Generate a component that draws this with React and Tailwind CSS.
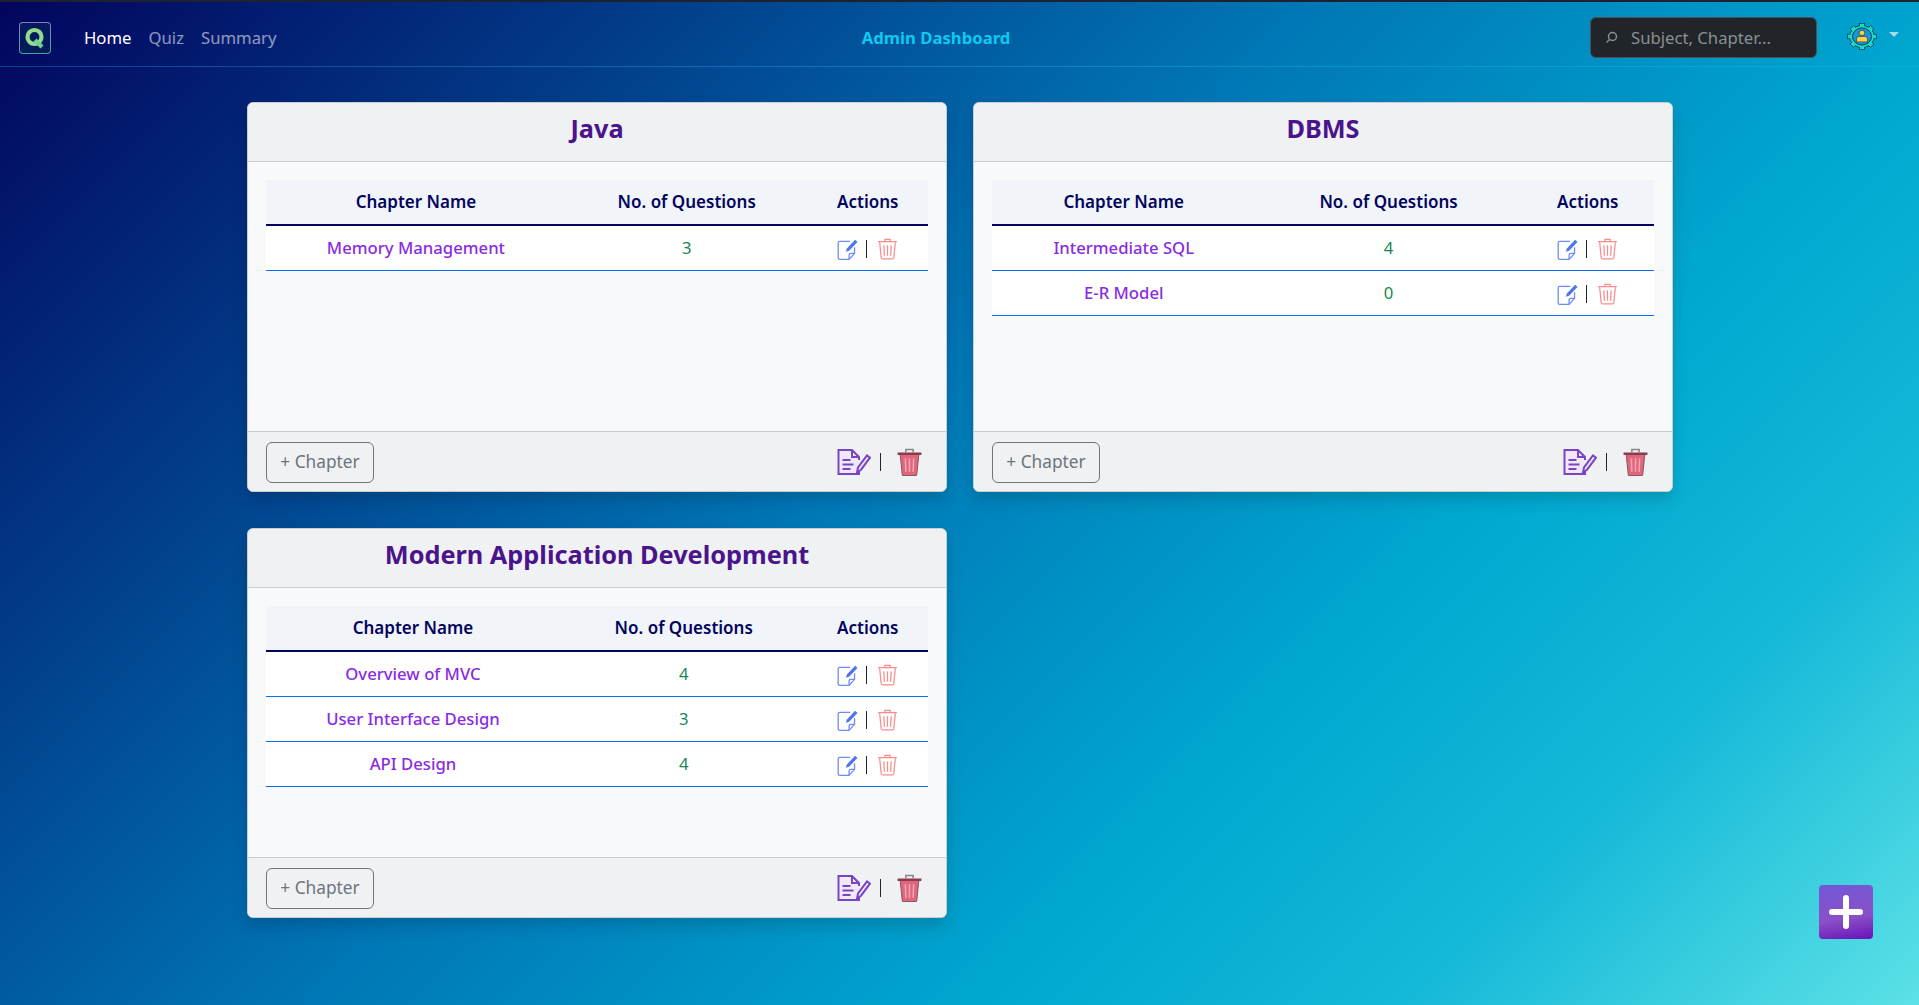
import React from 'react';

const subjects = [
  { name: 'Java', cols: ['w-[45.3%]', 'w-[36.5%]', 'w-[18.2%]'], chapters: [{ name: 'Memory Management', count: 3 }] },
  { name: 'DBMS', cols: ['w-[39.8%]', 'w-[40.2%]', 'w-[20%]'], chapters: [{ name: 'Intermediate SQL', count: 4 }, { name: 'E-R Model', count: 0 }] },
  {
    name: 'Modern Application Development',
    cols: ['w-[44.4%]', 'w-[37.4%]', 'w-[18.2%]'],
    chapters: [
      { name: 'Overview of MVC', count: 4 },
      { name: 'User Interface Design', count: 3 },
      { name: 'API Design', count: 4 },
    ],
  },
];

const EditSmall = () => (
  <svg width="24" height="24" viewBox="0 0 22 22" fill="none">
    <path d="M17 9.500V15l-5 5.500H3.500a1.500 1.500 0 0 1-1.500-1.500V5.500A1.500 1.500 0 0 1 3.500 4H13" stroke="#6d8df5" strokeWidth="1.200" />
    <path d="M12 20.500v-4a1.500 1.500 0 0 1 1.500-1.500H17" stroke="#6d8df5" strokeWidth="1.200" />
    <path d="M9 13.500l1-3 7.500-8 2.200 2-7.700 8z" fill="#4f74ee" />
  </svg>
);

const TrashSmall = () => (
  <svg width="21" height="23" viewBox="0 0 20 22" fill="none" stroke="#fb8a8a" strokeWidth="1.200">
    <path d="M1 4.500h18M7.500 4V2.200h5V4" />
    <path d="M2.500 5l1.500 15a1.500 1.500 0 0 0 1.500 1h9a1.500 1.500 0 0 0 1.500-1L17.500 5" />
    <path d="M6.500 8l.5 10M10 8v10M13.500 8l-.5 10" />
  </svg>
);

const EditBig = () => (
  <svg width="34" height="28" viewBox="0 0 34 28" fill="none">
    <path d="M22 21v5H1.500V2H15l7 7v3" fill="#efe9fb" stroke="#7a45c4" strokeWidth="2" />
    <path d="M15 2v7h7" stroke="#7a45c4" strokeWidth="2" />
    <path d="M5.500 12h8M5.500 16.500h11M5.500 21h8" stroke="#7a45c4" strokeWidth="2" />
    <path d="M20 24.500l1-5 9-12 3 2.200-9 12z" fill="#efe9fb" stroke="#7a45c4" strokeWidth="2" />
  </svg>
);

const TrashBig = () => (
  <svg width="25" height="28" viewBox="0 0 24 27" fill="none">
    <path d="M8.500 4V1.500h7V4" stroke="#888" strokeWidth="1.500" />
    <path d="M3 6l2 19.500a1 1 0 0 0 1 1h12a1 1 0 0 0 1-1L21 6z" fill="#e0667c" stroke="#8f5563" />
    <path d="M0.500 5.500h23" stroke="#8c3a4c" strokeWidth="2.500" />
    <path d="M8 10l.5 13M12 10v13M16 10l-.5 13" stroke="#f4a5b2" strokeWidth="1.500" />
  </svg>
);

const Logo = () => (
  <div className="w-[32px] h-[32px] rounded-[4px] p-px bg-gradient-to-b from-[#8a78c8] to-[#35a8a0]">
    <div className="w-full h-full rounded-[3px] bg-[#051a5c] flex items-center justify-center">
      <svg width="24" height="24" viewBox="0 0 24 24" fill="none">
        <circle cx="11.500" cy="11" r="7" stroke="#93dc8e" strokeWidth="4.200" />
        <path d="M12 14l7 7" stroke="#72d092" strokeWidth="4.200" />
      </svg>
    </div>
  </div>
);

const Avatar = () => (
  <svg width="30" height="27" viewBox="0 0 30 30" preserveAspectRatio="none" className="mb-[3px]">
    <circle cx="15" cy="15" r="12.400" fill="#17325a" />
    {[0, 45, 90, 135, 180, 225, 270, 315].map((a) => (
      <rect key={a} x="12.500" y="0.700" width="5" height="5" fill="#16e0c4" stroke="#17325a" strokeWidth="0.800" transform={`rotate(${a} 15 15)`} />
    ))}
    <circle cx="15" cy="15" r="11.800" fill="#16e0c4" />
    <circle cx="15" cy="15" r="9.500" fill="#1499d8" stroke="#17325a" strokeWidth="1" />
    <circle cx="15" cy="11" r="2.900" fill="#ffd23f" stroke="#17325a" strokeWidth="0.700" />
    <path d="M9.500 21v-3.500a2.500 2.500 0 0 1 2.500-2.500h6a2.500 2.500 0 0 1 2.500 2.500V21z" fill="#ffd23f" stroke="#17325a" strokeWidth="0.700" />
  </svg>
);

const SubjectCard = ({ subject }) => (
  <div className="h-[390px] flex flex-col rounded-[6px] border border-[#c9ccd1] bg-[#f8f9fa] shadow-[0_8px_16px_rgba(0,0,0,0.15)] overflow-hidden">
    <div className="h-[59px] shrink-0 flex items-center justify-center pb-[7px] bg-[#f0f1f3] border-b border-[#c9ccd1]">
      <h2 className="text-[25.300px] font-bold text-[#4a148c]">{subject.name}</h2>
    </div>
    <div className="flex-1 p-[18px]">
      <table className="w-full table-fixed border-collapse">
        <thead>
          <tr className="h-[45px] bg-[#f1f5f9] border-b-2 border-[#03045e] text-[#03045e]">
            {['Chapter Name', 'No. of Questions', 'Actions'].map((h, i) => (
              <th key={h} className={`text-[17px] font-semibold text-center ${subject.cols[i]}`}>{h}</th>
            ))}
          </tr>
        </thead>
        <tbody>
          {subject.chapters.map((c) => (
            <tr key={c.name} className="h-[45px] bg-white border-b border-[#0d6efd]">
              <td className="text-center text-[#8a2be2] font-medium">{c.name}</td>
              <td className="text-center text-[#198754]">{c.count}</td>
              <td>
                <div className="flex items-center justify-center pt-[2px] pr-[2px]">
                  <EditSmall />
                  <span className="w-px h-[18px] bg-[#212529] ml-[6px] mr-[10px]" />
                  <TrashSmall />
                </div>
              </td>
            </tr>
          ))}
        </tbody>
      </table>
    </div>
    <div className="h-[60px] shrink-0 flex items-center justify-between pl-[18px] pr-[24px] bg-[#f0f1f3] border-t border-[#c9ccd1]">
      <button className="h-[41px] w-[108px] rounded-[6px] border border-[#6c757d] text-[#6c757d] text-[17.300px] mt-px">+ Chapter</button>
      <div className="flex items-center">
        <EditBig />
        <span className="w-px h-[18px] bg-[#212529] ml-[9px] mr-[16px]" />
        <TrashBig />
      </div>
    </div>
  </div>
);

export default function App() {
  return (
    <div
      className="min-h-screen h-[1005px] relative overflow-hidden bg-[linear-gradient(135deg,#03045e_0%,#023e8a_23%,#0077b6_45%,#00a8d0_68%,#14b8d8_82%,#5ce1e6_100%)] text-[16.700px]"
      style={{ fontFamily: '"Noto Sans", "Open Sans", sans-serif' }}
    >
      <nav className="h-[67px] border-t-2 border-[#1c2230] border-b border-b-[#0dcaf0]/30 flex items-center pt-[7px] pl-[19px] pr-[20px]">
        <Logo />
        <div className="flex items-center gap-[17px] ml-[33px]">
          <span className="text-white">Home</span>
          <span className="text-white/55">Quiz</span>
          <span className="text-white/55">Summary</span>
        </div>
        <div className="absolute left-0 w-[1872px] flex justify-center pointer-events-none">
          <span className="font-bold text-[#0dcaf0]">Admin Dashboard</span>
        </div>
        <div className="ml-auto flex items-center">
          <div className="w-[227px] h-[41px] rounded-[6px] bg-[#212529] border border-[#495057] flex items-center pl-[14px] text-[#8a8f94]">
            <svg width="13" height="13" viewBox="0 0 13 13" fill="none" stroke="#8a8f94" strokeWidth="1.500">
              <circle cx="7.500" cy="5.500" r="4" />
              <path d="M4.500 8.500L1.500 11.500" />
            </svg>
            <span className="ml-[13px]">Subject, Chapter...</span>
          </div>
          <div className="ml-[30px] flex items-center gap-[12px]">
            <Avatar />
            <span className="w-0 h-0 border-x-[5px] border-x-transparent border-t-[5px] border-t-[#a5dbe8] mb-[6px]" />
          </div>
        </div>
      </nav>
      <main className="grid grid-cols-[700px_700px] gap-x-[26px] gap-y-[36px] ml-[247px] mt-[35px]">
        {subjects.map((s) => (
          <SubjectCard key={s.name} subject={s} />
        ))}
      </main>
      <button className="absolute left-[1819px] top-[885px] w-[54px] h-[54px] rounded-[4px] bg-[linear-gradient(170deg,#7258d6,#8a50c8_60%,#6a10b8)] flex items-center justify-center">
        <svg width="34" height="34" viewBox="0 0 34 34"><path d="M17 3v28M3 17h28" stroke="#fff" strokeWidth="6" strokeLinecap="round" /></svg>
      </button>
    </div>
  );
}
